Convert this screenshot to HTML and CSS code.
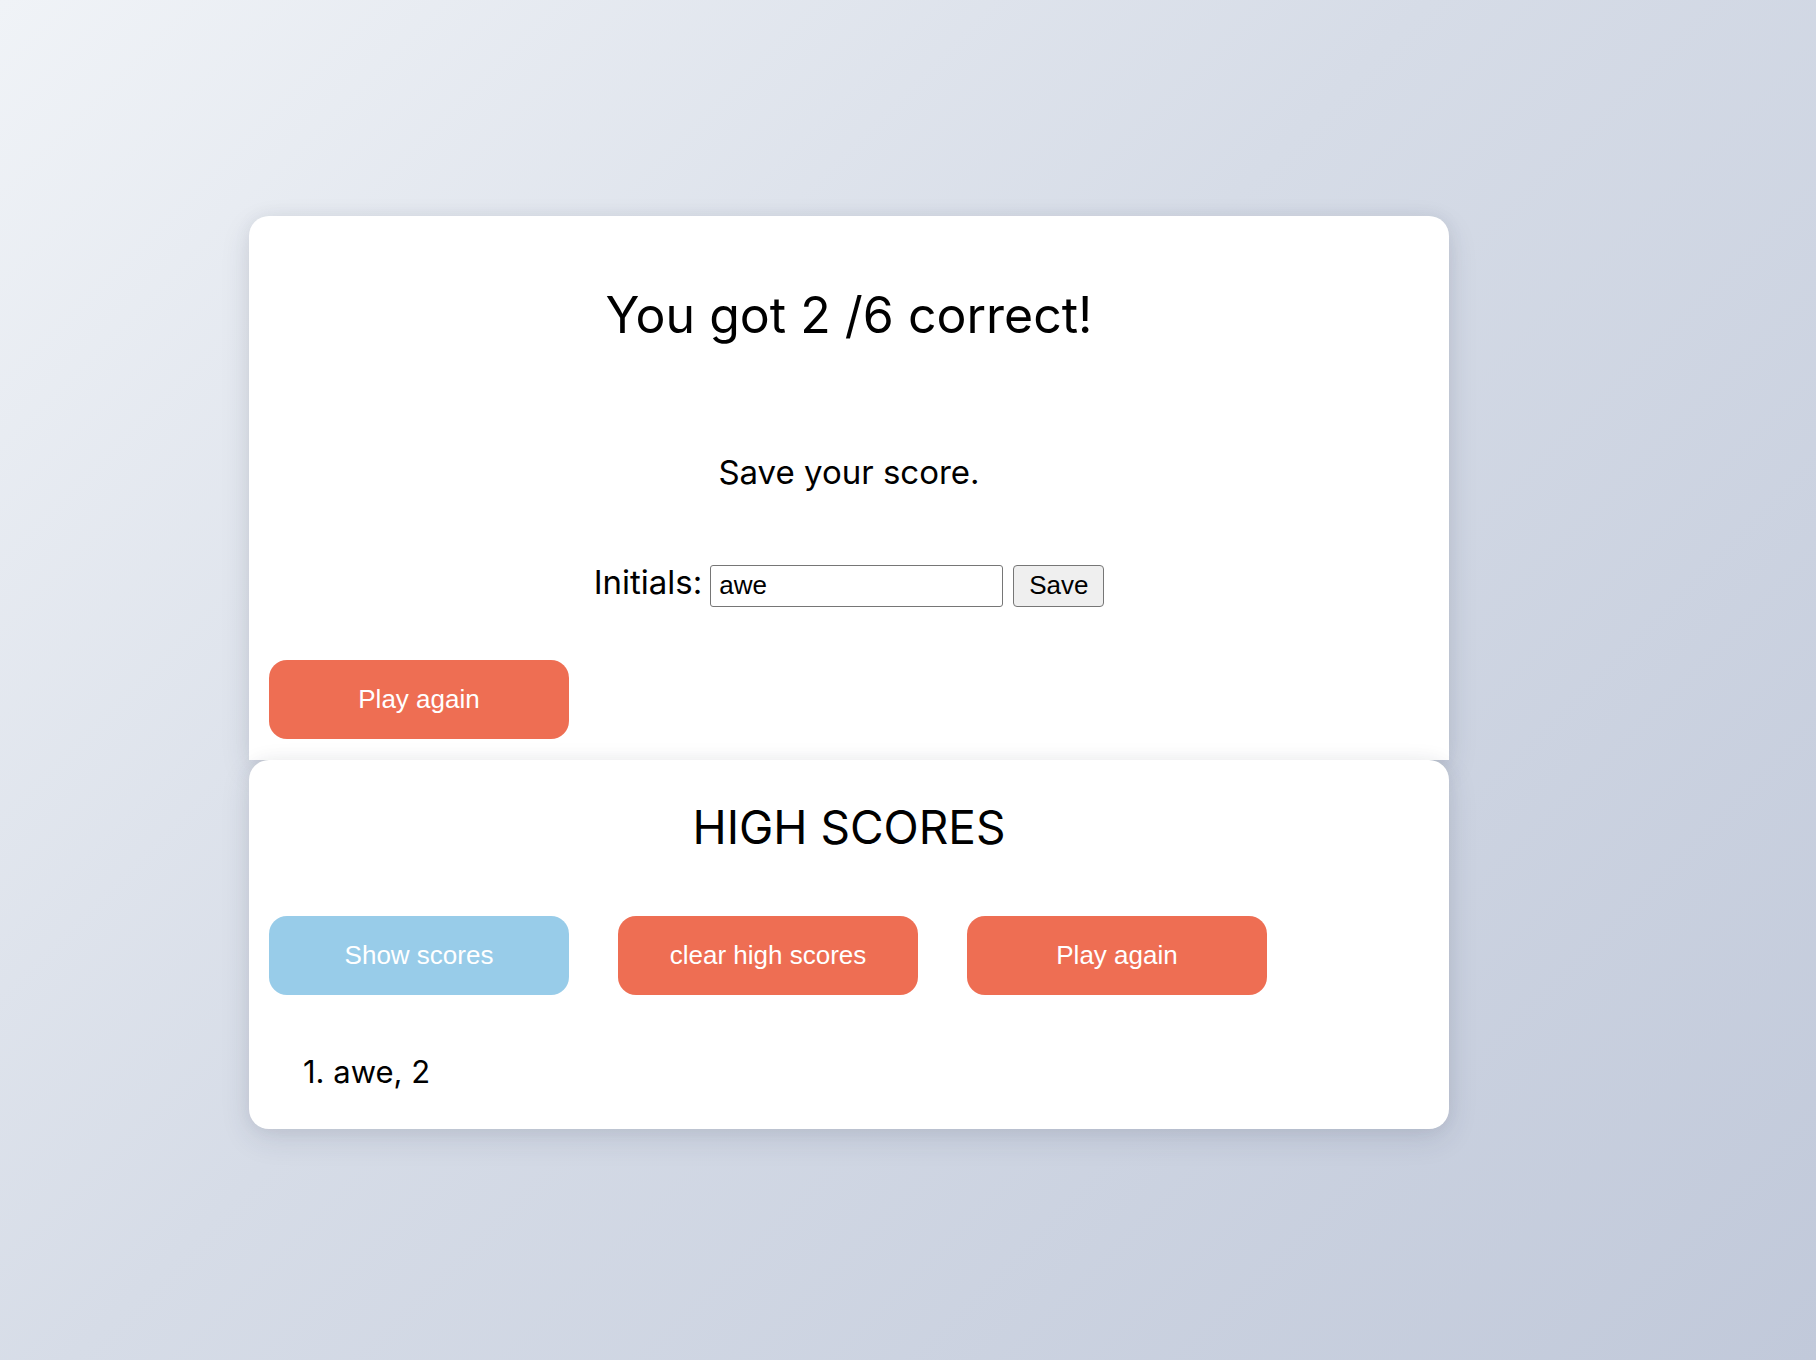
FILE: index.html
```html
<!DOCTYPE html>
<html lang="en">
<head>
<meta charset="utf-8">
<title>Quiz results</title>
<link rel="stylesheet" href="styles.css">
</head>
<body>
<main class="wrap">
  <section class="card card-result">
    <h1 class="title">You got 2 /6 correct!</h1>
    <p class="save-msg">Save your score.</p>
    <form class="initials-row">
      <label class="initials-label" for="initials">Initials:</label>
      <input class="initials-input" id="initials" type="text" value="awe">
      <button class="save-btn" type="button">Save</button>
    </form>
    <div class="btn-row">
      <button class="btn btn-orange" type="button">Play again</button>
    </div>
  </section>
  <section class="card card-scores">
    <h2 class="scores-title">HIGH SCORES</h2>
    <div class="btn-row btn-row-scores">
      <button class="btn btn-blue" type="button">Show scores</button>
      <button class="btn btn-orange" type="button">clear high scores</button>
      <button class="btn btn-orange" type="button">Play again</button>
    </div>
    <p class="score-item">1. awe, 2</p>
  </section>
</main>
</body>
</html>
```

FILE: styles.css
```css
html, body {
  margin: 0;
  padding: 0;
}

body {
  min-height: 100vh;
  background: linear-gradient(135deg, #f0f3f7 0%, #d6dce7 45%, #c1c9da 100%);
  font-family: Inter, "Noto Sans", sans-serif;
  color: #000;
}

.wrap {
  width: 1200px;
  padding: 216px 0 0 249px;
}

.card {
  background: #fff;
  position: relative;
  box-shadow: 0 0 18px rgba(0, 0, 0, 0.05), 0 10px 30px rgba(40, 50, 80, 0.12);
}

.card-result {
  border-radius: 20px 20px 0 0;
  padding: 69px 20px 21px;
}

.card-scores {
  border-radius: 20px;
  padding: 40px 20px 37px;
  z-index: 1;
}

.title {
  margin: 0;
  font-size: 50px;
  line-height: 60px;
  font-weight: 400;
  text-align: center;
}

.save-msg {
  margin: 107px 0 0;
  font-size: 33px;
  line-height: 40px;
  text-align: center;
}

.initials-row {
  margin: 70px 0 0;
  display: flex;
  justify-content: center;
  align-items: baseline;
}

.initials-label {
  font-size: 33px;
  line-height: 40px;
  margin-right: 8px;
}

.initials-input {
  box-sizing: border-box;
  width: 293px;
  height: 42px;
  padding: 0 8px;
  border: 1px solid #767676;
  border-radius: 3px;
  font-family: "Liberation Sans", Arial, sans-serif;
  font-size: 26px;
  color: #000;
  background: #fff;
}

.save-btn {
  box-sizing: border-box;
  width: 91px;
  height: 42px;
  margin-left: 10px;
  padding: 0;
  border: 1px solid #767676;
  border-radius: 4px;
  background: #efefef;
  font-family: "Liberation Sans", Arial, sans-serif;
  font-size: 26px;
  color: #000;
}

.btn-row {
  margin-top: 53px;
  display: flex;
  gap: 49px;
}

.btn {
  width: 300px;
  height: 79px;
  border: none;
  border-radius: 18px;
  color: #fff;
  font-family: "Liberation Sans", Arial, sans-serif;
  font-size: 26px;
  padding: 0;
}

.btn-orange {
  background: #ee6e53;
}

.btn-blue {
  background: #98cce9;
}

.scores-title {
  margin: 0;
  font-size: 46px;
  line-height: 54px;
  font-weight: 400;
  text-align: center;
}

.btn-row-scores {
  margin-top: 62px;
}

.score-item {
  margin: 57px 0 0 34px;
  font-size: 31px;
  line-height: 40px;
}
```
